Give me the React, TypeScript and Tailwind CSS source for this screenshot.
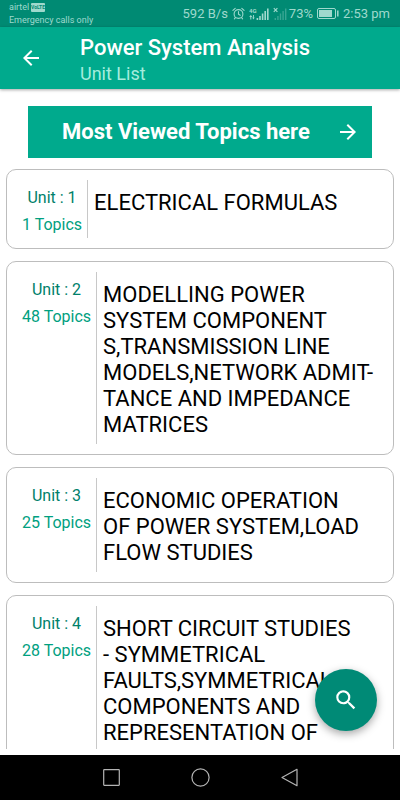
import React from "react"

type UnitType = {
  id: number
  topics: number
  title: string
}

const units: UnitType[] = [
  { id: 1, topics: 1, title: "ELECTRICAL FORMULAS" },
  {
    id: 2,
    topics: 48,
    title:
      "MODELLING POWER\nSYSTEM COMPONENT\nS,TRANSMISSION LINE\nMODELS,NETWORK ADMIT-\nTANCE AND IMPEDANCE\nMATRICES",
  },
  {
    id: 3,
    topics: 25,
    title: "ECONOMIC OPERATION\nOF POWER SYSTEM,LOAD\nFLOW STUDIES",
  },
  {
    id: 4,
    topics: 28,
    title:
      "SHORT CIRCUIT STUDIES\n- SYMMETRICAL\nFAULTS,SYMMETRICAL\nCOMPONENTS AND\nREPRESENTATION OF",
  },
]

const AlarmIcon = () => (
  <svg width="13" height="13" viewBox="0 0 13 13" fill="none" stroke="currentColor" strokeLinecap="round">
    <circle cx="6.5" cy="7" r="4.4" strokeWidth="1.1" />
    <path d="M6.5 4.6V7.2L8.2 8.3M.9 3.4L3.2 1.3M12.1 3.4L9.8 1.3M3.4 10.6L2.4 11.8M9.6 10.6L10.6 11.8" strokeWidth="1.1" />
  </svg>
)

const SignalIcon = () => (
  <svg width="20" height="14" viewBox="0 0 20 14" fill="currentColor">
    <text x="0" y="6" fontSize="6" fontWeight="700" fontFamily="Roboto">4G</text>
    <path d="M1.8 8L3.4 10H2.3V12.5H1.3V10H.2ZM4.4 12.5L3.2 10.6H4V8H4.9V10.6H5.7Z" />
    <path d="M7.6 11h1.6v2H7.6zM10.2 9h1.6v4h-1.6zM12.8 6.5h1.6V13h-1.6zM15.4 4H17v9h-1.6zM18 1.5h1.6V13H18z" />
  </svg>
)

const NoSignalIcon = () => (
  <svg width="14" height="14" viewBox="0 0 14 14" fill="currentColor">
    <path d="M.8 1.2L4.4 4.8M4.4 1.2L.8 4.8" stroke="currentColor" strokeWidth="1.2" />
    <path d="M1.6 11h1.4v2H1.6zM4.2 9h1.4v4H4.2zM6.8 6.5h1.4V13H6.8zM9.4 4h1.4v9H9.4zM12 1.5h1.4V13H12z" opacity=".35" />
  </svg>
)

const BatteryIcon = () => (
  <svg width="22" height="11" viewBox="0 0 22 11" fill="none">
    <rect x=".5" y=".5" width="18" height="10" rx="1.5" stroke="currentColor" />
    <rect x="2" y="2" width="13" height="7" fill="currentColor" />
    <path d="M20.8 2.5V8.5" stroke="currentColor" strokeWidth="1.5" />
  </svg>
)

const StatusBar = () => {
  return (
    <div className="flex h-[27px] shrink-0 items-center justify-between bg-[#008a73] pr-[10px] pl-[9px] text-[#9fd9cd]">
      <div className="flex flex-col text-[9px] leading-[13px]">
        <div className="flex items-center gap-[2px]">
          <span>airtel</span>
          <svg width="14" height="9" viewBox="0 0 14 9">
            <rect width="14" height="9" rx="1" fill="currentColor" />
            <text x="7" y="6.4" fontSize="5" fontWeight="700" fontFamily="Roboto" textAnchor="middle" fill="#008a73">
              VoLTE
            </text>
          </svg>
        </div>
        <span>Emergency calls only</span>
      </div>
      <div className="flex items-center gap-[4px] text-[13px] leading-4">
        <span>592 B/s</span>
        <AlarmIcon />
        <SignalIcon />
        <div className="flex items-center gap-[2px]">
          <NoSignalIcon />
          <span>73%</span>
        </div>
        <BatteryIcon />
        <span>2:53 pm</span>
      </div>
    </div>
  )
}

const Header = () => {
  return (
    <header className="z-10 flex h-[62px] shrink-0 items-center bg-[#00aa8d] pl-[19px] text-white shadow-[0_1px_3px_rgba(0,0,0,0.35)]">
      <button aria-label="Back" className="w-[61px]">
        <svg width="24" height="24" viewBox="0 0 24 24" fill="currentColor">
          <path d="M20 11H7.83l5.59-5.59L12 4l-8 8 8 8 1.41-1.41L7.83 13H20v-2z" />
        </svg>
      </button>
      <div className="pt-1">
        <h1 className="text-[22px] leading-[28px] font-medium">Power System Analysis</h1>
        <p className="text-[18px] leading-6 text-[#a5ecdd]">Unit List</p>
      </div>
    </header>
  )
}

const UnitCard = ({ unit }: { unit: UnitType }) => {
  return (
    <li className="flex shrink-0 rounded-[10px] border border-[#bdbdbd] py-[10px] pl-[15px]">
      <div className="flex shrink-0 flex-col items-center gap-[7px] border-r border-[#c8c8c8] pt-2 pr-[5px] pb-[3px] text-[16px] leading-5">
        <span className="text-[#00806a]">Unit : {unit.id}</span>
        <span className="text-[#00a080]">{unit.topics} Topics</span>
      </div>
      <h2 className="pt-[10px] pb-[6px] pl-[6px] text-[22px] leading-[26px] whitespace-pre-line text-black">
        {unit.title}
      </h2>
    </li>
  )
}

const NavBar = () => {
  return (
    <nav className="flex h-[45px] shrink-0 items-center justify-center gap-[70px] bg-black text-[#b4b4b4]">
      <button aria-label="Recent apps">
        <svg width="19" height="19" viewBox="0 0 19 19" fill="none" stroke="currentColor">
          <rect x="1.7" y="1.7" width="15.6" height="15.6" rx=".5" strokeWidth="1.2" />
        </svg>
      </button>
      <button aria-label="Home">
        <svg width="19" height="19" viewBox="0 0 19 19" fill="none" stroke="currentColor">
          <circle cx="9.5" cy="9.5" r="8.6" strokeWidth="1.2" />
        </svg>
      </button>
      <button aria-label="Go back">
        <svg width="19" height="19" viewBox="0 0 19 19" fill="none" stroke="currentColor">
          <path d="M17 1.3V17.7L2 9.5Z" strokeWidth="1.2" strokeLinejoin="round" />
        </svg>
      </button>
    </nav>
  )
}

const App = () => {
  return (
    <div className="relative flex h-screen flex-col bg-white font-[Roboto,sans-serif]">
      <StatusBar />
      <Header />
      <main className="mb-[6px] flex min-h-0 flex-1 flex-col overflow-hidden px-[6px] pt-[17px]">
        <a
          href="#most-viewed"
          className="mx-[22px] flex h-[52px] shrink-0 items-center justify-between bg-[#00aa8d] pr-3 pl-[34px] text-white"
        >
          <span className="text-[22px] leading-7 font-bold">Most Viewed Topics here</span>
          <svg width="24" height="24" viewBox="0 0 24 24" fill="currentColor">
            <path d="M12 4l-1.41 1.41L16.17 11H4v2h12.17l-5.58 5.59L12 20l8-8z" />
          </svg>
        </a>
        <ul className="mt-[11px] flex flex-col gap-3">
          {units.map((unit) => (
            <UnitCard key={unit.id} unit={unit} />
          ))}
        </ul>
      </main>
      <button
        aria-label="Search"
        className="absolute right-[23px] bottom-[69px] flex size-[62px] items-center justify-center rounded-full bg-[#008a76] text-white shadow-[0_3px_8px_rgba(0,0,0,0.35)]"
      >
        <svg width="26" height="26" viewBox="0 0 24 24" fill="currentColor">
          <path d="M15.5 14h-.79l-.28-.27A6.471 6.471 0 0 0 16 9.5 6.5 6.5 0 1 0 9.5 16c1.61 0 3.09-.59 4.23-1.57l.27.28v.79l5 4.99L20.49 19l-4.99-5zm-6 0C7.01 14 5 11.99 5 9.5S7.01 5 9.5 5 14 7.01 14 9.5 11.99 14 9.5 14z" />
        </svg>
      </button>
      <NavBar />
    </div>
  )
}

export default App
